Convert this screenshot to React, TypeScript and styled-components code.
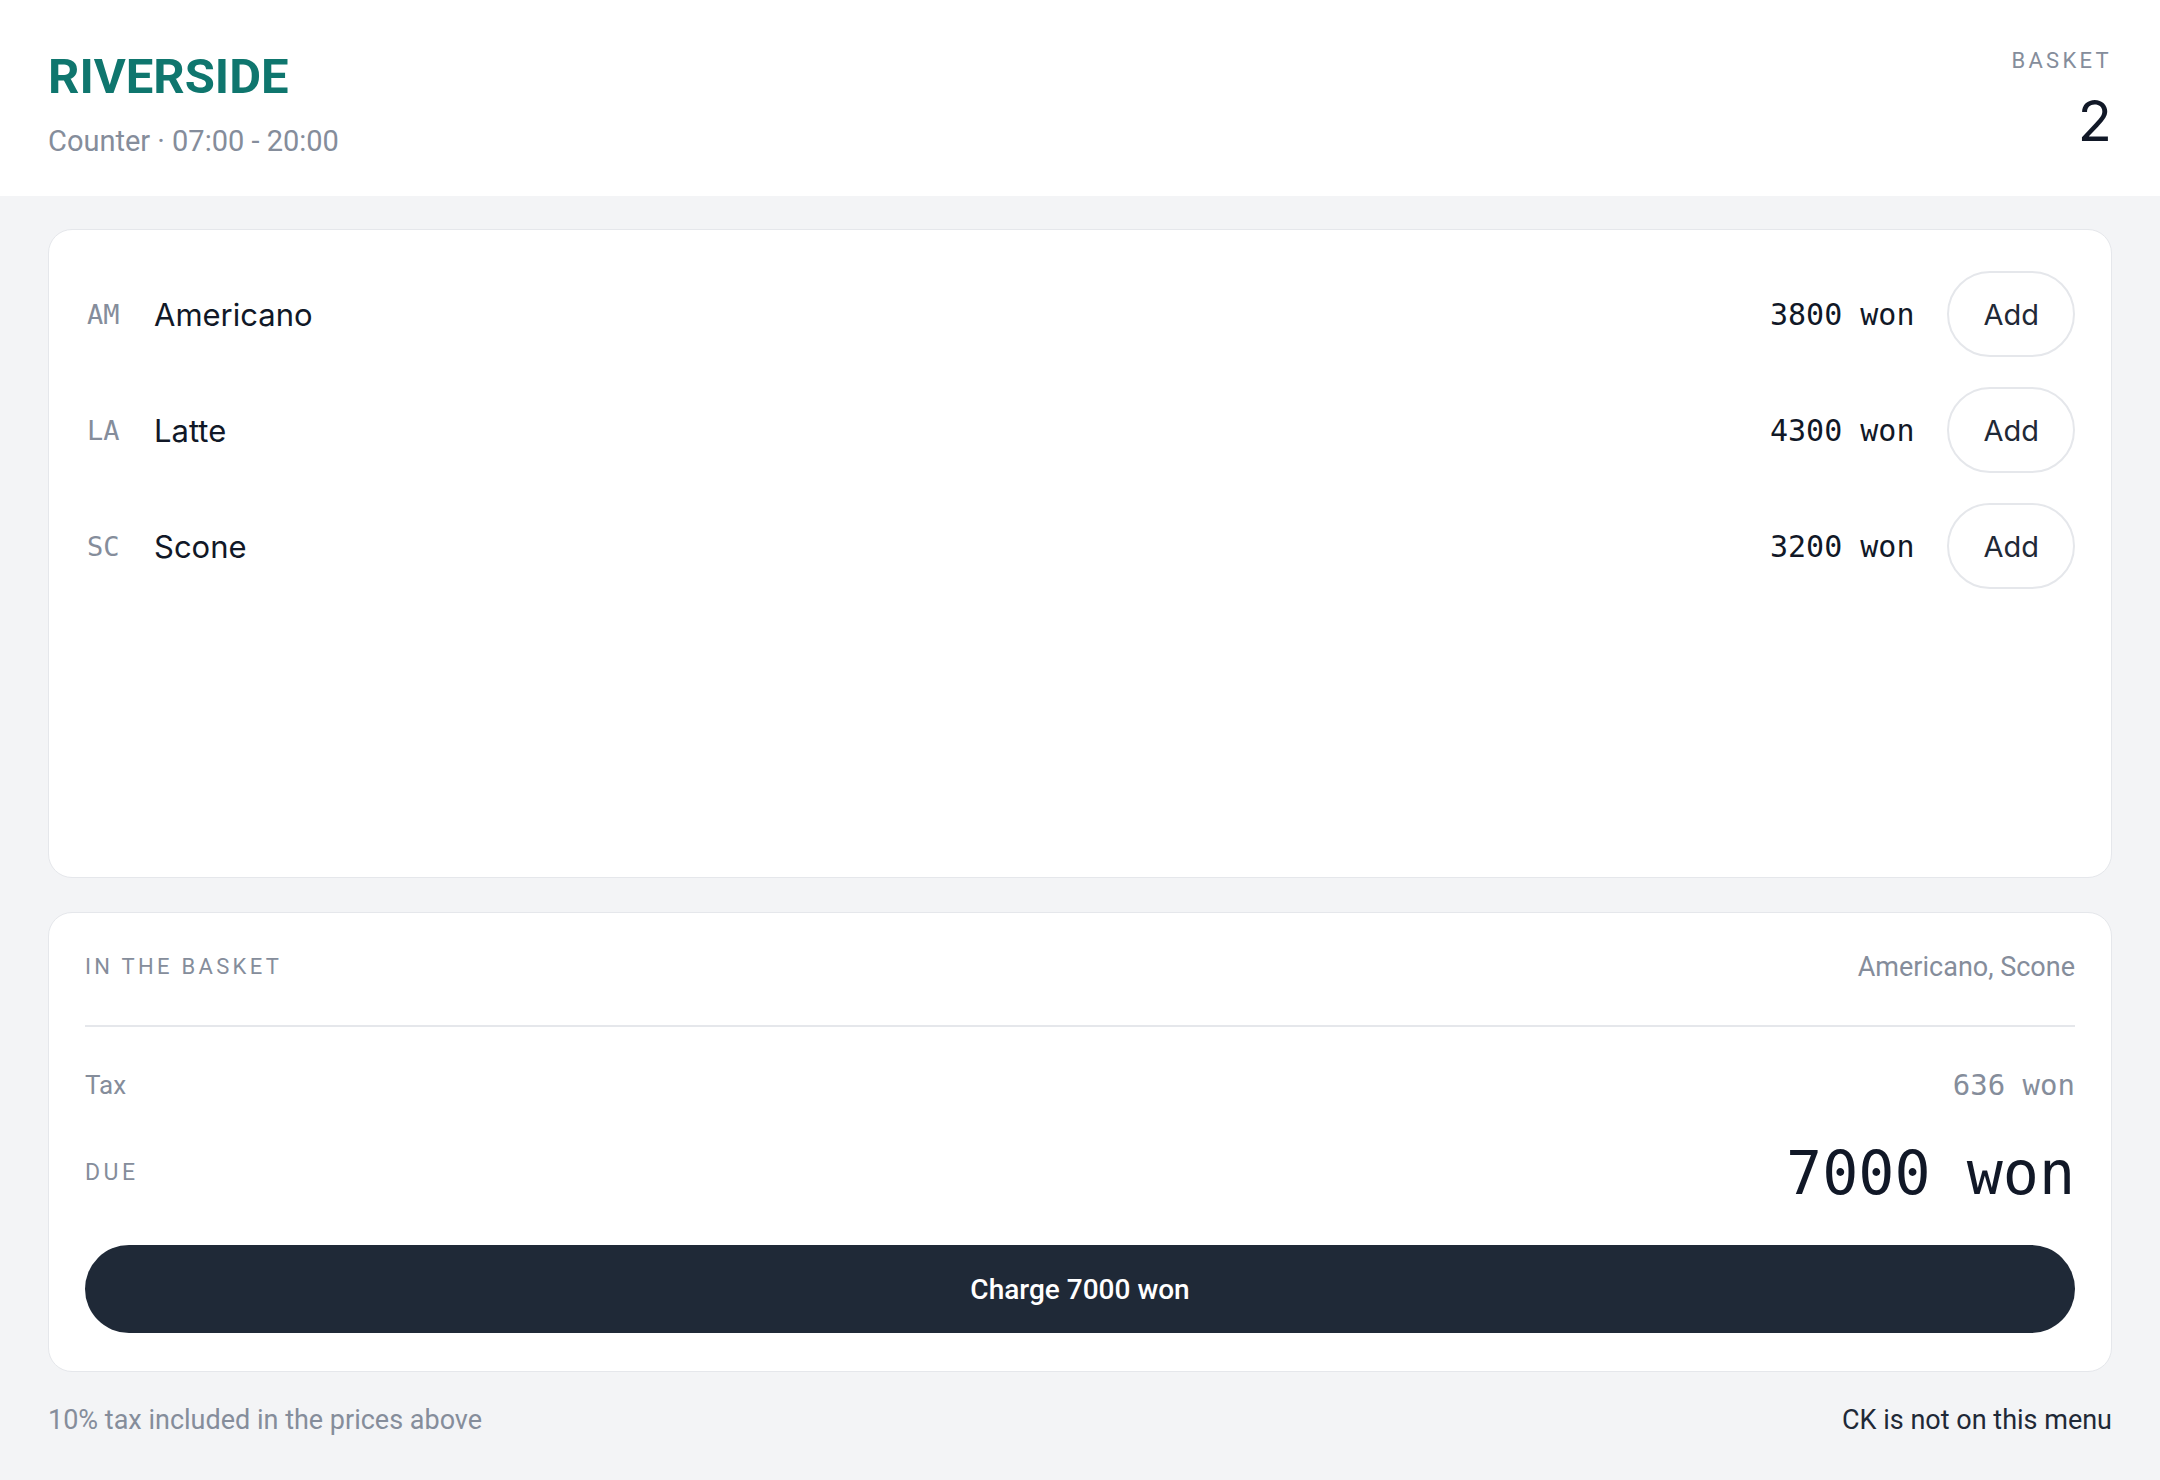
import styled, { createGlobalStyle } from "styled-components";

const GlobalStyle = createGlobalStyle`
  html, body {
    margin: 0;
    padding: 0;
    background: #f3f4f6;
  }
  * {
    box-sizing: border-box;
  }
  body {
    font-family: Roboto, "Liberation Sans", sans-serif;
    color: #111827;
  }
`;

const menu = [
  { code: "AM", name: "Americano", price: 3800 },
  { code: "LA", name: "Latte", price: 4300 },
  { code: "SC", name: "Scone", price: 3200 },
];

const mono = `"DejaVu Sans Mono", "Liberation Mono", monospace`;

const App = () => {
  return (
    <>
      <GlobalStyle />
      <Page>
        <Header>
          <div>
            <Title>RIVERSIDE</Title>
            <Subtitle>Counter · 07:00 - 20:00</Subtitle>
          </div>
          <BasketBox>
            <Label>BASKET</Label>
            <BasketCount>2</BasketCount>
          </BasketBox>
        </Header>

        <Main>
          <MenuCard>
            {menu.map((item) => (
              <ItemRow key={item.code}>
                <Code>{item.code}</Code>
                <ItemName>{item.name}</ItemName>
                <Price>{item.price} won</Price>
                <AddButton>Add</AddButton>
              </ItemRow>
            ))}
          </MenuCard>

          <SummaryCard>
            <BasketLine>
              <Label>IN THE BASKET</Label>
              <BasketItems>Americano, Scone</BasketItems>
            </BasketLine>
            <TaxRow>
              <TaxLabel>Tax</TaxLabel>
              <TaxValue>636 won</TaxValue>
            </TaxRow>
            <DueRow>
              <Label $size={23}>DUE</Label>
              <DueValue>7000 won</DueValue>
            </DueRow>
            <ChargeButton>Charge 7000 won</ChargeButton>
          </SummaryCard>

          <Footer>
            <FootNote>10% tax included in the prices above</FootNote>
            <FootNote $dark>CK is not on this menu</FootNote>
          </Footer>
        </Main>
      </Page>
    </>
  );
};

const Page = styled.div`
  min-height: 100vh;
  display: flex;
  flex-direction: column;
`;

const Header = styled.header`
  height: 196px;
  padding: 48px 48px 0;
  background: #ffffff;
  display: flex;
  justify-content: space-between;
  align-items: flex-start;
`;

const Title = styled.h1`
  margin: 0;
  font-size: 49px;
  line-height: 1.2;
  font-weight: 700;
  color: #0f766e;
`;

const Subtitle = styled.div`
  margin-top: 14px;
  font-size: 29px;
  line-height: 1.4;
  color: #858d9b;
`;

const BasketBox = styled.div`
  display: flex;
  flex-direction: column;
  align-items: flex-end;
`;

const Label = styled.div<{ $size?: number }>`
  font-size: ${(p) => p.$size ?? 22}px;
  line-height: 1.2;
  letter-spacing: 0.15em;
  color: #858d9b;
  text-transform: uppercase;
`;

const BasketCount = styled.div`
  margin-top: 17px;
  font-family: Inter, Roboto, sans-serif;
  font-size: 56px;
  line-height: 1.1;
  color: #111827;
`;

const Main = styled.main`
  flex: 1;
  display: flex;
  flex-direction: column;
  padding: 33px 48px 42px;
`;

const Card = styled.section`
  background: #ffffff;
  border: 1.5px solid #e5e7eb;
  border-radius: 24px;
  padding: 36px;
`;

const MenuCard = styled(Card)`
  flex: 1;
  display: flex;
  flex-direction: column;
  gap: 20px;
`;

const ItemRow = styled.div`
  height: 96px;
  display: flex;
  align-items: center;
`;

const Code = styled.span`
  font-family: ${mono};
  font-size: 27px;
  color: #858d9b;
  width: 34px;
  margin-left: 2px;
  margin-right: 33px;
`;

const ItemName = styled.span`
  flex: 1;
  font-family: Inter, Roboto, sans-serif;
  font-size: 31px;
  color: #111827;
`;

const Price = styled.span`
  font-family: ${mono};
  font-size: 30px;
  color: #111827;
  margin-right: 33px;
`;

const AddButton = styled.button`
  height: 86px;
  padding: 0 34px;
  border: 2px solid #e5e7eb;
  border-radius: 999px;
  background: #ffffff;
  font-family: Inter, Roboto, sans-serif;
  font-size: 29px;
  color: #1f2937;
  cursor: pointer;
`;

const SummaryCard = styled(Card)`
  margin-top: 34px;
  padding-bottom: 38px;
  display: flex;
  flex-direction: column;
`;

const BasketLine = styled.div`
  display: flex;
  justify-content: space-between;
  align-items: center;
  height: 36px;
  box-sizing: content-box;
  padding-bottom: 40px;
  border-bottom: 2px solid #e5e7eb;
`;

const BasketItems = styled.span`
  font-size: 27px;
  color: #858d9b;
`;

const TaxRow = styled.div`
  margin-top: 40px;
  height: 36px;
  display: flex;
  justify-content: space-between;
  align-items: center;
`;

const TaxLabel = styled.span`
  font-size: 26px;
  color: #858d9b;
`;

const TaxValue = styled.span`
  font-family: ${mono};
  font-size: 29px;
  color: #858d9b;
`;

const DueRow = styled.div`
  margin-top: 32px;
  height: 76px;
  display: flex;
  justify-content: space-between;
  align-items: center;
`;

const DueValue = styled.span`
  font-family: ${mono};
  font-size: 60px;
  color: #111827;
`;

const ChargeButton = styled.button`
  margin-top: 34px;
  height: 88px;
  width: 100%;
  border: none;
  border-radius: 999px;
  background: #1f2937;
  color: #ffffff;
  font-family: Roboto, sans-serif;
  font-size: 28px;
  font-weight: 500;
  cursor: pointer;
`;

const Footer = styled.footer`
  margin-top: 30px;
  height: 36px;
  display: flex;
  justify-content: space-between;
  align-items: center;
`;

const FootNote = styled.span<{ $dark?: boolean }>`
  font-size: 27px;
  color: ${(p) => (p.$dark ? "#1f2937" : "#858d9b")};
`;

export default App;
